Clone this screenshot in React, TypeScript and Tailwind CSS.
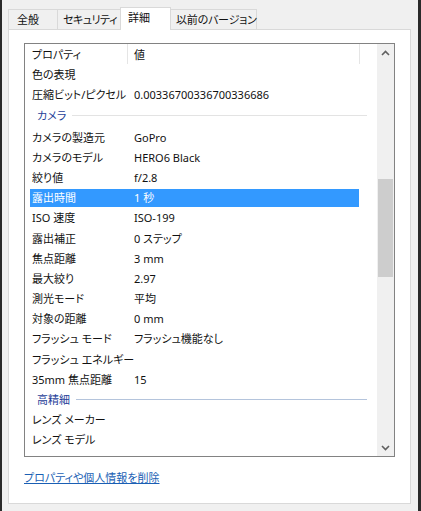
import React from "react";

type Row =
  | { kind: "row"; k: string; v: string; sel?: boolean; h?: string }
  | { kind: "group"; k: string; line: string; h?: string };

function Chevron({ up }: { up?: boolean }) {
  return (
    <svg width="9" height="6" viewBox="0 0 9 6">
      <path
        d={up ? "M1 5 L4.5 1.5 L8 5" : "M1 1 L4.5 4.5 L8 1"}
        fill="none"
        stroke="#606060"
        strokeWidth="1.6"
      />
    </svg>
  );
}

export default function App() {
  const rows: Row[] = [
    { kind: "row", k: "色の表現", v: "", h: "h-[20px]" },
    { kind: "row", k: "圧縮ビット/ピクセル", v: "0.00336700336700336686", h: "h-[20px]" },
    { kind: "group", k: "カメラ", line: "bg-[#e3e3e3]", h: "h-[23px]" },
    { kind: "row", k: "カメラの製造元", v: "GoPro" },
    { kind: "row", k: "カメラのモデル", v: "HERO6 Black" },
    { kind: "row", k: "絞り値", v: "f/2.8" },
    { kind: "row", k: "露出時間", v: "1 秒", sel: true },
    { kind: "row", k: "ISO 速度", v: "ISO-199" },
    { kind: "row", k: "露出補正", v: "0 ステップ" },
    { kind: "row", k: "焦点距離", v: "3 mm" },
    { kind: "row", k: "最大絞り", v: "2.97" },
    { kind: "row", k: "測光モード", v: "平均" },
    { kind: "row", k: "対象の距離", v: "0 mm" },
    { kind: "row", k: "フラッシュ モード", v: "フラッシュ機能なし" },
    { kind: "row", k: "フラッシュ エネルギー", v: "" },
    { kind: "row", k: "35mm 焦点距離", v: "15" },
    { kind: "group", k: "高精細", line: "bg-[#b4c4dc]" },
    { kind: "row", k: "レンズ メーカー", v: "" },
    { kind: "row", k: "レンズ モデル", v: "" },
    { kind: "row", k: "", v: "" },
  ];

  return (
    <div className="w-[421px] h-[511px] flex bg-[#f0f0f0] overflow-hidden font-['Noto_Sans','Noto_Sans_CJK_JP',sans-serif] [font-feature-settings:'palt'] text-[11px] text-[#111] leading-none">
      <div className="w-[2px] h-full bg-[#2a2a2a]" />
      <div className="flex-1 flex flex-col pt-[7px] pl-[6px]">
        {/* Tabs */}
        <div className="flex items-end h-[23px] -mb-px relative z-10 whitespace-nowrap">
          <div className="w-[49px] h-[20px] mb-px border-l border-t border-[#d9d9d9] bg-[#f0f0f0] flex items-center pl-[8px]">
            全般
          </div>
          <div className="w-[63px] h-[20px] mb-px border-l border-t border-[#d9d9d9] bg-[#f0f0f0] flex items-center pl-[5px] tracking-[-0.5px]">
            セキュリティ
          </div>
          <div className="w-[51px] h-[23px] border-l border-t border-r border-[#d9d9d9] bg-white flex items-start pt-[4px] pl-[7px]">
            詳細
          </div>
          <div className="w-[86px] h-[20px] mb-px border-t border-r border-[#d9d9d9] bg-[#f0f0f0] flex items-center pl-[5px] tracking-[-0.2px]">
            以前のバージョン
          </div>
        </div>
        {/* Panel */}
        <div className="w-[403px] h-[475px] border border-[#d9d9d9] bg-white pt-[13px] pl-[15px] flex flex-col">
          <div className="w-[371px] h-[414px] border border-[#828282] flex">
            <div className="flex-1 flex flex-col overflow-hidden relative">
              {/* header */}
              <div className="h-[20px] shrink-0 flex items-center relative bg-white z-10">
                <div className="w-[102px] pl-[7px] h-full flex items-center">プロパティ</div>
                <div className="w-px h-full bg-[#e5e5e5]" />
                <div className="w-[231px] pl-[6px] h-full flex items-center">値</div>
                <div className="w-px h-full bg-[#e5e5e5]" />
              </div>
              {rows.map((r, i) =>
                r.kind === "group" ? (
                  <div
                    key={i}
                    className={`${r.h ?? "h-[20.2px]"} shrink-0 flex items-center pl-[12px] w-[342px]`}
                  >
                    <span className="text-[#1f3f99]">{r.k}</span>
                    <div className={`flex-1 h-px ml-[6px] ${r.line}`} />
                  </div>
                ) : (
                  <div
                    key={i}
                    className={`${r.h ?? "h-[20.2px]"} shrink-0 flex items-center pl-[5px]`}
                  >
                    <div
                      className={`w-[329px] h-[18px] flex items-center ${
                        r.sel ? "bg-[#3399ff] text-white" : ""
                      }`}
                    >
                      <div className="w-[104px] pl-[2px] whitespace-nowrap">{r.k}</div>
                      <div className="whitespace-nowrap">{r.v}</div>
                    </div>
                  </div>
                )
              )}
            </div>
            {/* scrollbar */}
            <div className="w-[17px] h-full bg-[#f0f0f0] flex flex-col">
              <div className="h-[17px] flex items-center justify-center">
                <Chevron up />
              </div>
              <div className="h-[118px]" />
              <div className="h-[98px] mx-[1px] bg-[#cdcdcd]" />
              <div className="flex-1" />
              <div className="h-[17px] flex items-center justify-center">
                <Chevron />
              </div>
            </div>
          </div>
          <div className="mt-[13px] text-[#1a5fb4] underline leading-[16px]">
            プロパティや個人情報を削除
          </div>
        </div>
      </div>
      <div className="w-[3px] h-full bg-[#2a2a2a]" />
    </div>
  );
}
